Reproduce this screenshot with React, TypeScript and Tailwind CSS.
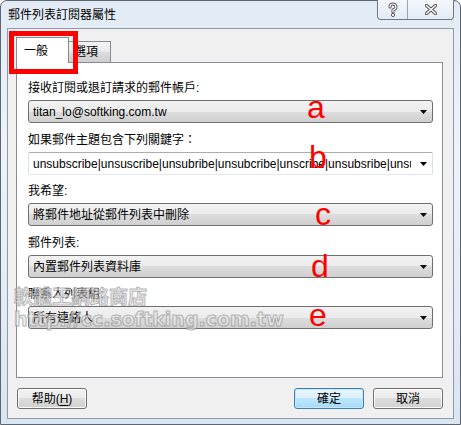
import React from "react";

const ui = "font-['Liberation_Sans','Noto_Sans_CJK_TC',sans-serif] text-[12px] leading-[16px] text-black";

function Arrow() {
  return (
    <svg width="7" height="4" viewBox="0 0 7 4" className="shrink-0">
      <polygon points="0,0 7,0 3.5,4" fill="#000" />
    </svg>
  );
}

function Combo({ text, edit = false }: { text: string; edit?: boolean }) {
  const box = edit
    ? "rounded-[2px] border border-[#abadb3] border-x-[#dbdfe6] border-b-[#e3e9ef] bg-white pl-[4px]"
    : "rounded-[3px] border border-[#707070] bg-[linear-gradient(#f2f2f2,#ebebeb_50%,#dddddd_50%,#cfcfcf)] pl-[4px]";
  return (
    <div className={`mt-[4px] h-[23px] flex items-center ${box}`}>
      <span className="flex-1 overflow-hidden whitespace-nowrap mr-[9px]">{text}</span>
      <span className="mr-[5px] flex">
        <Arrow />
      </span>
    </div>
  );
}

function Field({ label, text, edit, className = "" }: { label: string; text: string; edit?: boolean; className?: string }) {
  return (
    <div className={className}>
      <div className="h-[16px]">{label}</div>
      <Combo text={text} edit={edit} />
    </div>
  );
}

function Btn({ children, primary = false }: { children: React.ReactNode; primary?: boolean }) {
  const look = primary
    ? "border-[#3c7fb1] bg-[linear-gradient(#eaf6fd,#d9f0fc_50%,#bee6fd_50%,#a7d9f5)] shadow-[inset_0_0_0_1px_#c6e7f8]"
    : "border-[#707070] bg-[linear-gradient(#f2f2f2,#ebebeb_50%,#dddddd_50%,#cfcfcf)] shadow-[inset_0_0_0_1px_#fcfcfc]";
  return (
    <div className={`w-[70px] h-[21px] rounded-[3px] border flex items-center justify-center ${look}`}>
      {children}
    </div>
  );
}

export default function App() {
  return (
    <div className={`relative w-[461px] h-[425px] overflow-hidden ${ui}`}>
      <div className="w-full h-full flex flex-col px-[6px] pb-[5px] rounded-t-[7px] border border-[#5d6670] bg-[linear-gradient(180deg,#e2ebf5,#edf3f9_35%,#e3ecf6_70%,#d9e5f1)]">
        {/* Title bar */}
        <div className="h-[27px] flex items-center pl-[1px]">郵件列表訂閱器屬性</div>

        {/* Client area */}
        <div className="flex-1 flex flex-col border border-[#8d9aa8] bg-[#f0f0f0] pt-[8px] pl-[8px] pr-[10px]">
          {/* Tabs */}
          <div className="h-[26px] flex items-end">
            <div className="relative z-10 w-[53px] h-[26px] flex items-center pl-[7px] border border-b-0 border-[#898c95] bg-white">
              一般
            </div>
            <div className="w-[42px] h-[21px] mb-[1px] flex items-center pl-[5px] border border-l-0 border-b-0 border-[#898c95] bg-[linear-gradient(#f2f2f2,#ebebeb_50%,#dddddd_50%,#cfcfcf)]">
              選項
            </div>
          </div>

          {/* Tab page */}
          <div className="-mt-px h-[316px] border border-[#898c95] bg-white pl-[11px] pr-[9px] pt-[17px]">
            <Field label="接收訂閱或退訂請求的郵件帳戶:" text="titan_lo@softking.com.tw" />
            <Field
              className="mt-[9px]"
              label="如果郵件主題包含下列關鍵字："
              text="unsubscribe|unsuscribe|unsubribe|unsubcribe|unscribe|unsubsribe|unsubscrbe|unsubscibe"
              edit
            />
            <Field className="mt-[8px]" label="我希望:" text="將郵件地址從郵件列表中刪除" />
            <Field className="mt-[9px]" label="郵件列表:" text="內置郵件列表資料庫" />
            <Field className="mt-[8px]" label="聯系人列表組:" text="所有連絡人" />
          </div>

          {/* Buttons */}
          <div className="mt-[10px] mb-[9px] flex items-center">
            <div className="ml-[1px]">
              <Btn>
                <span>
                  帮助(<span className="underline underline-offset-2">H</span>)
                </span>
              </Btn>
            </div>
            <div className="ml-auto flex gap-[9px]">
              <Btn primary>確定</Btn>
              <Btn>取消</Btn>
            </div>
          </div>
        </div>
      </div>

      {/* Caption buttons */}
      <div className="absolute top-0 right-[7px] w-[77px] h-[20px] flex rounded-b-[4px] border border-t-0 border-[#6f7883] bg-[linear-gradient(#f4f8fc,#e3ebf4)] overflow-hidden">
        <div className="w-[30px] h-full flex items-center justify-center border-r border-[#9aa4af]">
          <svg width="10" height="15" viewBox="0 0 10 15">
            <path d="M2 5 Q2 2 5 2 Q8 2 8 5 Q8 7 5 8 L5 10" fill="none" stroke="#555" strokeWidth="3" strokeLinecap="round" />
            <path d="M2 5 Q2 2 5 2 Q8 2 8 5 Q8 7 5 8 L5 10" fill="none" stroke="#fff" strokeWidth="1.2" strokeLinecap="round" />
            <circle cx="5" cy="13" r="1.6" fill="#fff" stroke="#555" strokeWidth="1" />
          </svg>
        </div>
        <div className="flex-1 flex items-center justify-center">
          <svg width="12" height="11" viewBox="0 0 12 11">
            <path d="M1.5 1.5 L10.5 9.5 M10.5 1.5 L1.5 9.5" stroke="#555" strokeWidth="3.4" strokeLinecap="round" />
            <path d="M1.5 1.5 L10.5 9.5 M10.5 1.5 L1.5 9.5" stroke="#fff" strokeWidth="1.4" strokeLinecap="round" />
          </svg>
        </div>
      </div>

      {/* Watermark */}
      <div className="absolute left-[14px] top-[284px] pointer-events-none opacity-70 text-[#e8e8e8] [-webkit-text-stroke:1px_#999999]">
        <div className="font-['Noto_Sans_CJK_TC',sans-serif] font-bold text-[19px] leading-[23px]">軟體王網路商店</div>
        <div className="font-['DejaVu_Sans',sans-serif] font-bold text-[19px] leading-[25px]">http://cc.softking.com.tw</div>
      </div>

      {/* Annotations */}
      <div className="absolute left-[9px] top-[31px] w-[69px] h-[43px] border-[5px] border-[#ff0000] pointer-events-none" />
      <span className="absolute left-[307px] top-[91px] font-['Liberation_Sans',sans-serif] text-[32px] leading-[32px] text-[#ff0000]">a</span>
      <span className="absolute left-[309px] top-[141px] font-['Liberation_Sans',sans-serif] text-[32px] leading-[32px] text-[#ff0000]">b</span>
      <span className="absolute left-[315px] top-[198px] font-['Liberation_Sans',sans-serif] text-[32px] leading-[32px] text-[#ff0000]">c</span>
      <span className="absolute left-[311px] top-[250px] font-['Liberation_Sans',sans-serif] text-[32px] leading-[32px] text-[#ff0000]">d</span>
      <span className="absolute left-[309px] top-[299px] font-['Liberation_Sans',sans-serif] text-[32px] leading-[32px] text-[#ff0000]">e</span>
    </div>
  );
}
